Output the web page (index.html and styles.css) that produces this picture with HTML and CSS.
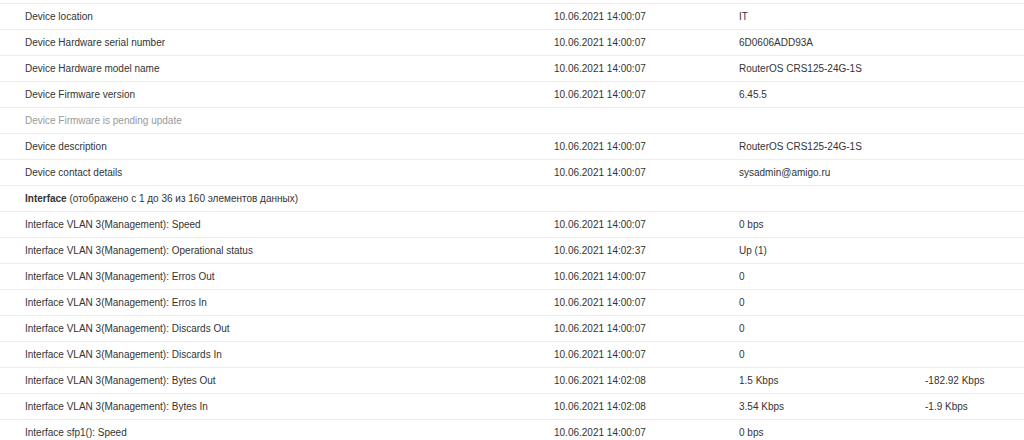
FILE: index.html
```html
<!DOCTYPE html>
<html lang="ru">
<head>
<meta charset="utf-8">
<title>Device data</title>
<link rel="stylesheet" href="styles.css">
</head>
<body>
<table class="data">
  <colgroup>
    <col class="c-name"><col class="c-time"><col class="c-value"><col class="c-change">
  </colgroup>
  <tbody>
    <tr><td>Device location</td><td>10.06.2021 14:00:07</td><td>IT</td><td></td></tr>
    <tr><td>Device Hardware serial number</td><td>10.06.2021 14:00:07</td><td>6D0606ADD93A</td><td></td></tr>
    <tr><td>Device Hardware model name</td><td>10.06.2021 14:00:07</td><td>RouterOS CRS125-24G-1S</td><td></td></tr>
    <tr><td>Device Firmware version</td><td>10.06.2021 14:00:07</td><td>6.45.5</td><td></td></tr>
    <tr class="muted"><td>Device Firmware is pending update</td><td></td><td></td><td></td></tr>
    <tr><td>Device description</td><td>10.06.2021 14:00:07</td><td>RouterOS CRS125-24G-1S</td><td></td></tr>
    <tr><td>Device contact details</td><td>10.06.2021 14:00:07</td><td>sysadmin@amigo.ru</td><td></td></tr>
    <tr><td colspan="4"><b>Interface</b> (отображено с 1 до 36 из 160 элементов данных)</td></tr>
    <tr><td>Interface VLAN 3(Management): Speed</td><td>10.06.2021 14:00:07</td><td>0 bps</td><td></td></tr>
    <tr><td>Interface VLAN 3(Management): Operational status</td><td>10.06.2021 14:02:37</td><td>Up (1)</td><td></td></tr>
    <tr><td>Interface VLAN 3(Management): Erros Out</td><td>10.06.2021 14:00:07</td><td>0</td><td></td></tr>
    <tr><td>Interface VLAN 3(Management): Erros In</td><td>10.06.2021 14:00:07</td><td>0</td><td></td></tr>
    <tr><td>Interface VLAN 3(Management): Discards Out</td><td>10.06.2021 14:00:07</td><td>0</td><td></td></tr>
    <tr><td>Interface VLAN 3(Management): Discards In</td><td>10.06.2021 14:00:07</td><td>0</td><td></td></tr>
    <tr><td>Interface VLAN 3(Management): Bytes Out</td><td>10.06.2021 14:02:08</td><td>1.5 Kbps</td><td>-182.92 Kbps</td></tr>
    <tr><td>Interface VLAN 3(Management): Bytes In</td><td>10.06.2021 14:02:08</td><td>3.54 Kbps</td><td>-1.9 Kbps</td></tr>
    <tr><td>Interface sfp1(): Speed</td><td>10.06.2021 14:00:07</td><td>0 bps</td><td></td></tr>
  </tbody>
</table>
</body>
</html>
```

FILE: styles.css
```css
html, body {
  margin: 0;
  padding: 0;
  background: #ffffff;
}
body {
  font-family: "Liberation Sans", Arial, sans-serif;
  font-size: 10px;
  color: #333333;
  overflow: hidden;
}
.data {
  width: 1024px;
  margin-top: 3px;
  border-collapse: collapse;
  table-layout: fixed;
  border-top: 1px solid #ececec;
}
.c-name { width: 554px; }
.c-time { width: 185px; }
.c-value { width: 186px; }
.c-change { width: 99px; }
.data td {
  height: 25px;
  padding: 0;
  border-bottom: 1px solid #ececec;
  vertical-align: middle;
  white-space: nowrap;
  line-height: 12px;
}
.data td:first-child {
  padding-left: 25px;
}
.data b {
  font-weight: bold;
}
.muted td {
  color: #999999;
}
```
